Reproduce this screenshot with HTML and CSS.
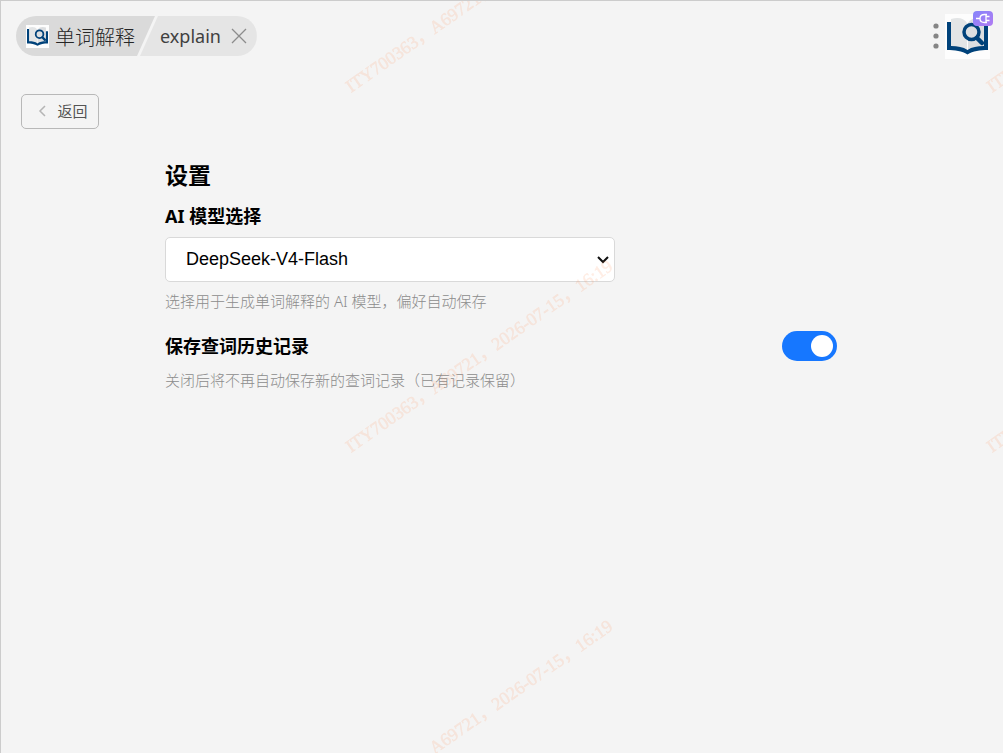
FILE: index.html
```html
<!DOCTYPE html>
<html lang="zh-CN">
<head>
<meta charset="utf-8">
<meta name="viewport" content="width=device-width, initial-scale=1">
<title>单词解释</title>
<link rel="stylesheet" href="styles.css">
</head>
<body>
<svg class="symbols" aria-hidden="true">
  <symbol id="book" viewBox="0 0 45 45">
    <rect width="45" height="45" fill="#fdfdfd"/>
    <path d="M6 5C13 3 19 4 22 9V37C18 33 13 33 6 33Z" fill="#e3e5e6"/>
    <path d="M39 5C32 3 26 4 23 9V37C27 33 32 33 39 33Z" fill="#dcdee0"/>
    <path d="M2 8H6V32C13 32 18 33 22.500 36C27 33 32 32 39 32V12H43V36C35 36 28 37 22.500 40.500C17 37 10 36 2 36Z" fill="#00427a"/>
    <circle cx="26.500" cy="18" r="7.500" fill="#dcdfe1" stroke="#00427a" stroke-width="3.500"/>
    <path d="M32 24L37 29" stroke="#00427a" stroke-width="4.500" stroke-linecap="round"/>
  </symbol>
</svg>
<div class="window">
  <header class="topbar">
    <div class="tabs">
      <div class="tab-app">
        <svg class="tab-icon" aria-hidden="true"><use href="#book"/></svg>
        <span>单词解释</span>
      </div>
      <div class="tab-command">
        <span>explain</span>
        <button class="close" type="button" aria-label="关闭">
          <svg width="16" height="16" viewBox="0 0 16 16"><path d="M1 1L15 15M15 1L1 15" stroke="#8c8c8c" stroke-width="1.300" fill="none"/></svg>
        </button>
      </div>
    </div>
    <div class="actions">
      <button class="more" type="button" aria-label="更多">
        <svg width="6" height="28" viewBox="0 0 6 28" fill="#858585"><circle cx="3" cy="3" r="2.600"/><circle cx="3" cy="13" r="2.600"/><circle cx="3" cy="23" r="2.600"/></svg>
      </button>
      <div class="app">
        <svg class="app-icon" role="img" aria-label="单词解释"><use href="#book"/></svg>
        <svg class="badge" viewBox="0 0 20 15" aria-hidden="true">
          <defs><linearGradient id="violet" x1="0" y1="0" x2="1" y2="1"><stop offset="0" stop-color="#8585fa"/><stop offset="1" stop-color="#b17bf2"/></linearGradient></defs>
          <rect width="20" height="15" rx="4" fill="url(#violet)"/>
          <path d="M3 7.500H7M14 3.500H11.500C8.500 3.500 7 5 7 7.500C7 10 8.500 11.500 11.500 11.500H14M13 3V12M13 5.500H16.500M13 9.500H16.500" fill="none" stroke="#fff" stroke-width="1.300"/>
        </svg>
      </div>
    </div>
  </header>
  <button class="back" type="button">
    <svg width="8" height="12" viewBox="0 0 8 12"><path d="M7 1L2 6L7 11" fill="none" stroke="#b5b5b5" stroke-width="1.500"/></svg>
    <span>返回</span>
  </button>
  <main class="settings">
    <h1 class="title">设置</h1>
    <label class="name" for="model">AI 模型选择</label>
    <div class="picker">
      <select class="select" id="model"><option>DeepSeek-V4-Flash</option></select>
      <svg class="chevron" viewBox="0 0 12 8" aria-hidden="true"><path d="M1 1L6 6L11 1" fill="none" stroke="#111" stroke-width="2"/></svg>
    </div>
    <p class="hint">选择用于生成单词解释的 AI 模型，偏好自动保存</p>
    <div class="row">
      <label class="name" for="history">保存查词历史记录</label>
      <input class="switch" id="history" type="checkbox" role="switch" checked>
    </div>
    <p class="hint">关闭后将不再自动保存新的查词记录（已有记录保留）</p>
  </main>
  <svg class="watermark" aria-hidden="true">
    <defs>
      <pattern id="mark" x="300" y="168" width="641" height="360" patternUnits="userSpaceOnUse">
        <text class="mark-text" transform="translate(50 284) rotate(-35)">ITY700363，A69721，2026-07-15，16:19</text>
      </pattern>
    </defs>
    <rect width="100%" height="100%" fill="url(#mark)"/>
  </svg>
</div>
</body>
</html>
```
FILE: styles.css
```css
* {
  box-sizing: border-box;
}

body {
  margin: 0;
  background: #f4f4f4;
  color: #000;
  font-family: "Noto Sans", "Noto Sans CJK SC", sans-serif;
}

button {
  padding: 0;
  border: 0;
  background: none;
  font: inherit;
}

.symbols {
  position: absolute;
  width: 0;
  height: 0;
}

.window {
  position: relative;
  min-height: 100vh;
  padding-right: 2px;
  border-top: 1px solid #ccc;
  border-left: 1px solid #ccc;
  overflow: hidden;
}

.topbar {
  display: flex;
  justify-content: space-between;
  align-items: flex-start;
  padding: 13px 11px 0 15px;
}

.tabs {
  display: flex;
  height: 40px;
  margin-top: 2px;
  border-radius: 20px;
  overflow: hidden;
  color: #404040;
}

.tab-app {
  display: flex;
  align-items: center;
  gap: 6px;
  padding: 0 20px 0 10px;
  background: #dadada;
  color: #262626;
  font-family: "Noto Sans CJK SC", sans-serif;
  font-size: 20px;
  font-weight: 300;
  clip-path: polygon(0 0, 100% 0, calc(100% - 18px) 100%, 0 100%);
}

.tab-icon {
  width: 23px;
  height: 23px;
}

.tab-command {
  display: flex;
  align-items: center;
  gap: 10px;
  margin-left: -15px;
  padding: 0 10px 0 20px;
  background: #e5e5e5;
  font-size: 18px;
  clip-path: polygon(18px 0, 100% 0, 100% 100%, 0 100%);
}

.close {
  display: flex;
}

.actions {
  display: flex;
  align-items: center;
  gap: 6px;
}

.more {
  display: flex;
}

.app {
  position: relative;
}

.app-icon {
  display: block;
  width: 45px;
  height: 45px;
}

.badge {
  position: absolute;
  top: -3px;
  right: -3px;
  width: 20px;
  height: 15px;
}

.back {
  display: flex;
  align-items: center;
  justify-content: center;
  gap: 11px;
  width: 78px;
  height: 35px;
  margin: 35px 0 0 20px;
  padding: 0 0 2px 6px;
  border: 1px solid #b8b8b8;
  border-radius: 5px;
  color: #555;
  font-size: 15px;
}

.settings {
  max-width: 672px;
  margin: 29px auto 0;
}

.title {
  margin: 0;
  font-size: 23px;
  line-height: 34px;
}

.name {
  display: block;
  font-size: 18px;
  font-weight: 700;
  line-height: 30px;
}

.title + .name {
  margin-top: 9px;
}

.picker {
  display: grid;
  align-items: center;
  width: 67%;
  margin-top: 6px;
}

.select {
  grid-area: 1 / 1;
  width: 100%;
  height: 45px;
  padding: 0 20px 2px;
  border: 1px solid #d9d9d9;
  border-radius: 5px;
  appearance: none;
  background: #fff;
  color: #000;
  font-family: "Liberation Sans", sans-serif;
  font-size: 18px;
}

.chevron {
  grid-area: 1 / 1;
  justify-self: end;
  width: 12px;
  height: 8px;
  margin-right: 6px;
  pointer-events: none;
}

.hint {
  margin: 7px 0 0;
  color: #8c8c8c;
  font-size: 15px;
  font-weight: 300;
  line-height: 24px;
}

.row {
  display: flex;
  align-items: center;
  justify-content: space-between;
  margin-top: 18px;
}

.switch {
  display: flex;
  align-items: center;
  justify-content: flex-end;
  width: 55px;
  height: 30px;
  margin: 0;
  padding: 0 4px;
  border-radius: 15px;
  appearance: none;
  background: #ccc;
}

.switch::before {
  width: 22px;
  height: 22px;
  border-radius: 50%;
  background: #fff;
  content: "";
}

.switch:checked {
  background: #1677ff;
}

.switch:not(:checked) {
  justify-content: flex-start;
}

.watermark {
  position: absolute;
  inset: 0;
  width: 100%;
  height: 100%;
  pointer-events: none;
}

.mark-text {
  fill: rgb(255, 125, 60);
  stroke: rgb(255, 125, 60);
  stroke-width: 0.5;
  opacity: 0.14;
  font-family: "Liberation Serif", "Noto Sans CJK SC", serif;
  font-size: 18px;
}
```
